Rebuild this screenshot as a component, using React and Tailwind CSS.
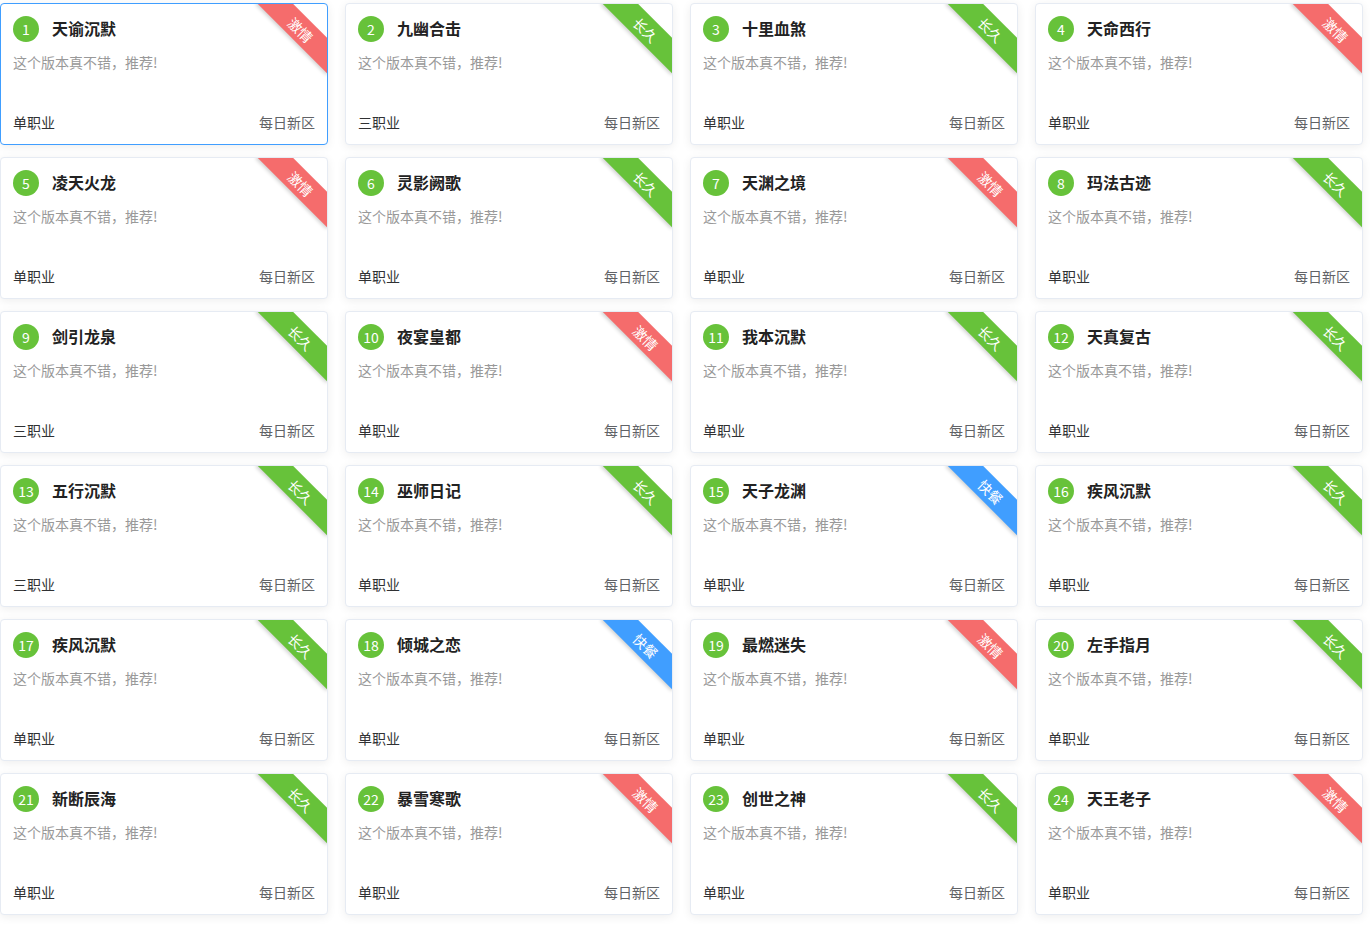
const games = [
  ['天谕沉默', '激情', '单职业'],
  ['九幽合击', '长久', '三职业'],
  ['十里血煞', '长久', '单职业'],
  ['天命西行', '激情', '单职业'],
  ['凌天火龙', '激情', '单职业'],
  ['灵影阙歌', '长久', '单职业'],
  ['天渊之境', '激情', '单职业'],
  ['玛法古迹', '长久', '单职业'],
  ['剑引龙泉', '长久', '三职业'],
  ['夜宴皇都', '激情', '单职业'],
  ['我本沉默', '长久', '单职业'],
  ['天真复古', '长久', '单职业'],
  ['五行沉默', '长久', '三职业'],
  ['巫师日记', '长久', '单职业'],
  ['天子龙渊', '快餐', '单职业'],
  ['疾风沉默', '长久', '单职业'],
  ['疾风沉默', '长久', '单职业'],
  ['倾城之恋', '快餐', '单职业'],
  ['最燃迷失', '激情', '单职业'],
  ['左手指月', '长久', '单职业'],
  ['新断辰海', '长久', '单职业'],
  ['暴雪寒歌', '激情', '单职业'],
  ['创世之神', '长久', '单职业'],
  ['天王老子', '激情', '单职业'],
]

const ribbonColor = {
  激情: 'bg-[#f56c6c]',
  长久: 'bg-[#67c23a]',
  快餐: 'bg-[#409eff]',
}

function GameCard({ idx, name, tag, job, active }) {
  return (
    <div
      className={
        'relative flex h-[142px] flex-col justify-between overflow-hidden rounded-[4px] border bg-white px-3 pt-3 pb-[12px] shadow-[0_2px_10px_rgba(0,0,0,0.07)] ' +
        (active ? 'border-[#409eff]' : 'border-[#e6ebf3]')
      }
    >
      <div className={'absolute right-[-24px] top-[13px] flex h-[25px] w-[100px] rotate-45 items-center justify-center text-[14px] leading-none text-white shadow-[0_2px_4px_rgba(0,0,0,0.18)] ' + ribbonColor[tag]}>
        {tag}
      </div>
      <div>
        <div className="flex items-center">
          <div className="flex h-[26px] w-[26px] items-center justify-center rounded-full bg-[#67c23a] text-[14px] text-white">
            {idx}
          </div>
          <div className="ml-[13px] -mt-[2px] text-[16px] font-bold text-[#222]">{name}</div>
        </div>
        <div className="mt-[10px] text-[14px] leading-[20px] text-[#999]">这个版本真不错，推荐!</div>
      </div>
      <div className="flex items-center justify-between text-[14px] leading-[20px]">
        <span className="text-[#303133]">{job}</span>
        <span className="text-[#606266]">每日新区</span>
      </div>
    </div>
  )
}

export default function App() {
  return (
    <div
      className="min-h-screen bg-white pt-[3px]"
      style={{ fontFamily: '"Noto Sans CJK SC", "Liberation Sans", sans-serif' }}
    >
      <div className="grid w-[1364px] grid-cols-[repeat(4,328px)] gap-x-[17px] gap-y-[12px]">
        {games.map(([name, tag, job], i) => (
          <GameCard key={i} idx={i + 1} name={name} tag={tag} job={job} active={i === 0} />
        ))}
      </div>
    </div>
  )
}
